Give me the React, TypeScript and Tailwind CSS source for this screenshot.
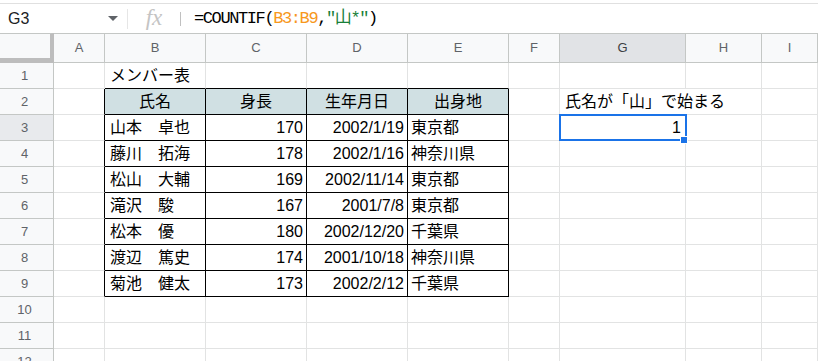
import React from "react";

const cols = ["A", "B", "C", "D", "E", "F", "G", "H", "I"];

type Row = { b?: string; c?: string; d?: string; e?: string };
const rows: Row[] = [
  { b: "メンバー表" },
  { b: "氏名", c: "身長", d: "生年月日", e: "出身地" },
  { b: "山本　卓也", c: "170", d: "2002/1/19", e: "東京都" },
  { b: "藤川　拓海", c: "178", d: "2002/1/16", e: "神奈川県" },
  { b: "松山　大輔", c: "169", d: "2002/11/14", e: "東京都" },
  { b: "滝沢　駿", c: "167", d: "2001/7/8", e: "東京都" },
  { b: "松本　優", c: "180", d: "2002/12/20", e: "千葉県" },
  { b: "渡辺　篤史", c: "174", d: "2001/10/18", e: "神奈川県" },
  { b: "菊池　健太", c: "173", d: "2002/2/12", e: "千葉県" },
  {},
  {},
  {},
];

const font = "font-['Liberation_Sans','Noto_Sans_CJK_JP',sans-serif]";

export default function App() {
  return (
    <div className={`w-[818px] h-[361px] overflow-hidden bg-white ${font}`}>
      {/* formula bar */}
      <div className="mt-[3px] h-[30px] border-t border-[#e0e0e0] flex items-center text-[#202124]">
        <div className="w-[127px] flex items-center pl-[8px] pr-[9px] h-full">
          <span className="text-[16px] flex-1">G3</span>
          <svg width="10" height="5" viewBox="0 0 10 5">
            <path d="M0 0 L10 0 L5 5 Z" fill="#5f6368" />
          </svg>
        </div>
        <div className="w-px h-[20px] bg-[#e6e6e6]" />
        <div className="w-[52px] flex items-center justify-center">
          <span className="font-['Liberation_Serif',serif] italic text-[23px] text-[#c4c4c4] leading-none -mt-[3px]">fx</span>
        </div>
        <div className="w-px h-[14px] bg-[#c0c0c0]" />
        <div className="pl-[13px] font-['Liberation_Mono','Noto_Sans_CJK_JP',monospace] text-[17px] tracking-[-1.4px] text-[#000]">
          <span>=COUNTIF(</span>
          <span className="text-[#f7981d]">B3:B9</span>
          <span>,</span>
          <span className="text-[#188038]">"山*"</span>
          <span>)</span>
        </div>
      </div>

      <div className="grid grid-cols-[54px_51px_101px_101px_101px_101px_51px_126px_76px_1fr] grid-rows-[30px_repeat(12,26px)]">
        {/* corner */}
        <div className="border-t border-[#c4c7c5] bg-[#f8f9fa] border-r-[4px] border-r-[#bdbdbd] border-b-[5px] border-b-[#bdbdbd]" />
        {cols.map((c) => (
          <div
            key={c}
            className={`border-t border-b border-r border-[#c4c7c5] flex items-center justify-center text-[13px] ${
              c === "G" ? "bg-[#e1e3e6] text-[#3c4043]" : "bg-[#f8f9fa] text-[#5f6368]"
            }`}
          >
            {c}
          </div>
        ))}
        {rows.map((r, i) => {
          const n = i + 1;
          const inTable = n >= 2 && n <= 9;
          const isHead = n === 2;
          const cellBase = "border-b border-r border-[#e2e3e3] flex items-center text-[16px] text-black whitespace-nowrap";
          const tbl = (extra: string) =>
            `border-b border-r ${inTable ? "border-black" : "border-[#e2e3e3]"} ${n === 1 ? "border-b-black" : ""} flex items-center text-[16px] text-black whitespace-nowrap ${
              isHead ? "bg-[#d0e0e3] justify-center" : extra
            }`;
          return (
            <React.Fragment key={n}>
              <div
                className={`border-b border-r border-[#c4c7c5] flex items-center justify-center pr-[4px] text-[13px] text-[#5f6368] ${
                  n === 3 ? "bg-[#e8eaed]" : "bg-[#f8f9fa]"
                }`}
              >
                {n}
              </div>
              {/* A */}
              <div className={`border-b border-r border-[#e2e3e3] ${inTable ? "border-r-black" : ""}`} />
              {/* B */}
              {n === 1 ? (
                <div className={`${cellBase} border-b-black pl-[5px]`}>{r.b}</div>
              ) : (
                <div className={tbl("pl-[5px]")}>{r.b}</div>
              )}
              <div className={tbl("justify-end pr-[3px]")}>{r.c}</div>
              <div className={tbl("justify-end pr-[3px]")}>{r.d}</div>
              <div className={tbl("pl-[3px]")}>{r.e}</div>
              {/* F */}
              <div className={cellBase} />
              {/* G */}
              <div
                className={`${cellBase} relative ${n === 3 ? "justify-end pr-[4px]" : "pl-[5px]"} ${
                  n === 2 ? "border-r-transparent" : ""
                }`}
              >
                {n === 2 && <span className="relative z-[1]">氏名が「山」で始まる</span>}
                {n === 3 && (
                  <>
                    <span>1</span>
                    <div className="absolute -left-[1px] -top-[1px] w-[128px] h-[27px] border-2 border-[#1a73e8] z-10" />
                    <div className="absolute -right-[3px] -bottom-[4px] w-[8px] h-[8px] bg-[#1a73e8] border border-white z-20" />
                  </>
                )}
              </div>
              {/* H */}
              <div className={cellBase} />
              {/* I */}
              <div className={cellBase} />
            </React.Fragment>
          );
        })}
      </div>
    </div>
  );
}
